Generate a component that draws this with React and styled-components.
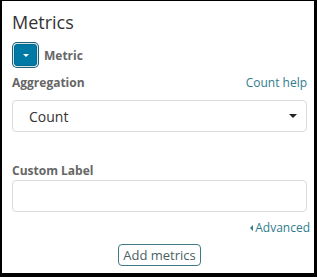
import React from "react";
import styled, { createGlobalStyle } from "styled-components";

const Global = createGlobalStyle`
  html, body { margin: 0; padding: 0; background: #fff; }
  body { font-family: "Open Sans", "Noto Sans", sans-serif; }
`;

const Frame = styled.div`
  box-sizing: border-box;
  width: 317px;
  height: 277px;
  border-style: solid;
  border-color: #000;
  border-width: 1px 3px 4px 2px;
  padding: 9px 7px 0 10px;
  display: flex;
  flex-direction: column;
  background: #fff;
`;

const Title = styled.h2`
  margin: 0;
  font-size: 18px;
  font-weight: 400;
  line-height: 24px;
  color: #333;
`;

const ToggleRow = styled.div`
  display: flex;
  align-items: center;
  gap: 7px;
  margin-top: 10px;
`;

const ToggleButton = styled.button`
  box-sizing: border-box;
  width: 23px;
  height: 22px;
  margin-left: 2px;
  padding: 0;
  border: 1px solid #006b8f;
  border-radius: 3px;
  background: #0079a5;
  box-shadow: 0 0 0 1px #d6e6ec, 0 0 0 2px #1c5f79;
  display: flex;
  align-items: center;
  justify-content: center;
`;

const Caret = styled.span`
  width: 0;
  height: 0;
  border-left: ${p => p.$size}px solid transparent;
  border-right: ${p => p.$size}px solid transparent;
  border-top: ${p => p.$size}px solid ${p => p.$color};
`;

const LeftCaret = styled.span`
  width: 0;
  height: 0;
  border-top: 3px solid transparent;
  border-bottom: 3px solid transparent;
  border-right: 3px solid #2f7c8c;
  margin-right: 2px;
`;

const GroupTitle = styled.span`
  font-size: 12px;
  font-weight: 700;
  color: #666;
`;

const LabelRow = styled.div`
  display: flex;
  justify-content: space-between;
  align-items: baseline;
  margin-top: ${p => p.$top}px;
`;

const Label = styled.label`
  font-size: 12px;
  font-weight: 700;
  color: #666;
  line-height: 16px;
`;

const Link = styled.a`
  font-size: 12px;
  color: #2f7c8c;
  line-height: 16px;
  text-decoration: none;
  display: inline-flex;
  align-items: center;
`;

const Field = styled.div`
  box-sizing: border-box;
  height: 32px;
  margin-top: ${p => p.$top}px;
  border: 1px solid #dcdcdc;
  border-radius: 4px;
  display: flex;
  align-items: center;
  justify-content: space-between;
  padding: 0 9px 0 16px;
  font-size: 14px;
  color: #333;
`;

const AdvancedRow = styled.div`
  display: flex;
  justify-content: flex-end;
  margin-top: 8px;
  margin-right: -3px;
`;

const Footer = styled.div`
  display: flex;
  justify-content: center;
  margin-top: 8px;
`;

const AddButton = styled.button`
  box-sizing: border-box;
  width: 83px;
  height: 22px;
  padding: 0;
  border: 1px solid #3f7b87;
  border-radius: 4px;
  background: #fff;
  font-family: inherit;
  font-size: 13px;
  color: #4b5f63;
`;

export default function App() {
  return (
    <>
      <Global />
      <Frame>
        <Title>Metrics</Title>
        <ToggleRow>
          <ToggleButton aria-label="Toggle">
            <Caret $size={3.5} $color="#fff" />
          </ToggleButton>
          <GroupTitle>Metric</GroupTitle>
        </ToggleRow>
        <LabelRow $top={9}>
          <Label>Aggregation</Label>
          <Link href="#">Count help</Link>
        </LabelRow>
        <Field $top={9}>
          <span>Count</span>
          <Caret $size={4} $color="#222" />
        </Field>
        <LabelRow $top={31}>
          <Label>Custom Label</Label>
        </LabelRow>
        <Field $top={1} />
        <AdvancedRow>
          <Link href="#">
            <LeftCaret />
            Advanced
          </Link>
        </AdvancedRow>
        <Footer>
          <AddButton>Add metrics</AddButton>
        </Footer>
      </Frame>
    </>
  );
}
